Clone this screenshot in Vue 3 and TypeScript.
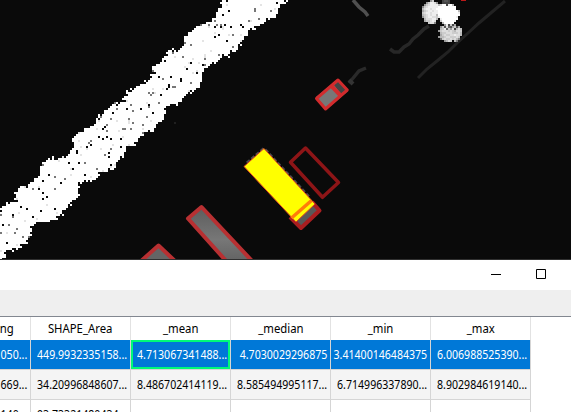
<script setup lang="ts">
type Point = [number, number]

const columns = ['ng', 'SHAPE_Area', '_mean', '_median', '_min', '_max']
const rows = [
  ['050...', '449.9932335158...', '4.713067341488...', '4.7030029296875', '3.41400146484375', '6.006988525390...'],
  ['669...', '34.20996848607...', '8.486702414119...', '8.585494995117...', '6.714996337890...', '8.902984619140...'],
  ['140...', '93.73321480434...', '', '', '', ''],
]

const band: Point[] = [
  [223, -2], [221, 8], [216, 12], [215, 19], [208, 22], [200, 24], [192, 31], [186, 36], [184, 43], [178, 52],
  [174, 48], [169, 50], [162, 61], [157, 64], [152, 66], [152, 77], [148, 78], [145, 82], [140, 85], [134, 89],
  [127, 92], [123, 104], [115, 103], [108, 107], [103, 115], [98, 117], [95, 124], [87, 128], [79, 132], [73, 138],
  [73, 147], [68, 155], [58, 158], [48, 159], [40, 164], [40, 175], [33, 181], [30, 186], [20, 187], [16, 193],
  [16, 202], [5, 203], [1, 207], [-2, 215], [-2, 260], [5, 258], [7, 249], [14, 250], [25, 243], [32, 236],
  [32, 226], [38, 222], [50, 222], [60, 216], [69, 206], [76, 199], [79, 190], [78, 181], [83, 182], [95, 181],
  [97, 175], [103, 172], [115, 167], [118, 159], [126, 155], [124, 150], [127, 146], [135, 146], [138, 140],
  [145, 132], [154, 131], [158, 123], [164, 118], [166, 107], [175, 104], [179, 106], [184, 96], [190, 93],
  [197, 88], [203, 80], [203, 70], [210, 65], [217, 63], [221, 56], [228, 57], [231, 52], [238, 49], [240, 42],
  [247, 36], [249, 30], [260, 26], [266, 21], [275, 16], [277, 9], [283, 5], [288, -2],
]

function inside(x: number, y: number, poly: Point[]): boolean {
  let hit = false
  for (let i = 0, j = poly.length - 1; i < poly.length; j = i++) {
    const [ax, ay] = poly[i]
    const [bx, by] = poly[j]
    if (ay > y !== by > y && x < ((bx - ax) * (y - ay)) / (by - ay) + ax) hit = !hit
  }
  return hit
}

let seed = 7351
function random(): number {
  seed = (seed * 16807) % 2147483647
  return seed / 2147483647
}

// Raster cells of the bright strip, with no-data specks and dimmer returns
let white = ''
let grey = ''
let pale = ''
for (let y = 0; y < 259; y += 2) {
  for (let x = 0; x < 290; x += 2) {
    const jx = (random() - 0.5) * 3.6
    const jy = (random() - 0.5) * 3.6
    const r = random()
    if (!inside(x + 1 + jx, y + 1 + jy, band)) continue
    const cell = `M${x} ${y}h2v2h-2z`
    if (r < 0.018) continue
    if (r < 0.034) grey += cell
    else if (r < 0.052) pale += cell
    else white += cell
  }
}

// Brightness of each 2px cell, one hex digit per cell; "." is empty
const blobRows = [
  '.....9c....4554......',
  '...9ceed9..4444......',
  '..9cdeeeebdff4efb....',
  '.8cdeeeeefffffffff...',
  '.bdeedeeffffffffff...',
  '.acdeedeeffffffffffb.',
  '.cdeedeeeffffffffffe.',
  '.bcdedeebfffffffffff.',
  '.9cdeeddceffffffffe..',
  '..bdddeeb.effffffff..',
  '..accded..cffffffe...',
  '....cdd8...bfffff....',
  '............9e4c4a...',
  '..........9c5d65ac5a.',
  '..........bce6c9d4bdb',
  '.........9cdddcdcbddc',
  '..........bccdddcccdb',
  '..........acdccddeddb',
  '.........9bbcddcccdc.',
  '..........7cdccdcdb8.',
  '............9bdc.b7..',
]
const blobCells = blobRows.flatMap((row, j) =>
  [...row].flatMap((c, i) => (c === '.' ? [] : [{ x: 420 + i * 2, y: j * 2, fill: `#${c}${c}${c}` }])),
)
</script>

<template>
  <main class="screen">
    <svg class="map" width="571" height="260" viewBox="0 0 571 260">
      <defs>
        <linearGradient id="roof" x1="0" y1="0" x2="0" y2="1">
          <stop offset="0" stop-color="#5c5c5c" />
          <stop offset=".6" stop-color="#777" />
          <stop offset="1" stop-color="#626262" />
        </linearGradient>
      </defs>
      <rect width="571" height="260" fill="#0a0a0a" />
      <g shape-rendering="crispEdges">
        <path :d="white" fill="#fff" />
        <path :d="pale" fill="#e4e4e4" />
        <path :d="grey" fill="#777" />
        <path d="M174 122h2v2h-2z" fill="#202020" />
      </g>
      <g fill="none">
        <path d="M353 0l6 7 6 5 3 4" stroke="#505050" stroke-width="3.5" />
        <path d="M390 49l4 3h5l5-5 5-3 4-5 5-4 6-6 5-3" stroke="#272727" stroke-width="3.5" />
        <path d="M418 78l9-9 10-8 11-9 9-9 10-9 12-11 13-11 13-11" stroke="#222" stroke-width="3" />
        <path d="M349 83l5-6 5-6 7-3" stroke="#2a2a2a" stroke-width="3.5" />
        <path d="M349 80l4 4" stroke="#343434" stroke-width="4" />
      </g>
      <g shape-rendering="crispEdges">
        <rect v-for="(c, i) in blobCells" :key="i" :x="c.x" :y="c.y" width="2" height="2" :fill="c.fill" />
        <path d="M461 0h5v1h-5z" fill="#bd1919" />
      </g>
      <path d="M316 97L338 79L348 91L327 109Z" fill="#777" />
      <path d="M334 85l5-4 7 9-5 4z" fill="#444" />
      <g fill="none" stroke="#d22b2d" stroke-width="3" stroke-linejoin="round">
        <path d="M316.5 98.5L338 80L347.3 90L325.5 109Z" />
        <path d="M331 85.5L341 96" stroke-width="4" />
      </g>
      <path d="M188 218L201.5 206.5L255 262H227Z" fill="url(#roof)" />
      <path d="M227 262L188 218.5L201.5 207L253 262" fill="none" stroke="#b83032" stroke-width="4" stroke-linejoin="round" />
      <path d="M140 262L158.5 245.5L176 262" fill="#656565" stroke="#b83032" stroke-width="4" stroke-linejoin="round" />
      <path d="M290.5 162.3L305.5 148L338.5 182.5L322.5 197.3Z" fill="none" stroke="#8e1517" stroke-width="3.5" stroke-linejoin="round" />
      <path d="M247 163L264 148.5L310 198" fill="none" stroke="#4c4c4c" stroke-width="3" stroke-dasharray="4 2" />
      <path d="M291 217L313 202L319 210L301 227Z" fill="#595959" />
      <path d="M290 217L301 228L319.5 210.5L312 202" fill="none" stroke="#a91e20" stroke-width="4" stroke-linejoin="round" />
      <path d="M244 166.5L264 148.5L315 204L296 222Z" fill="#ff0" stroke="#df3f22" stroke-width="1" />
      <path d="M291.5 218L311.5 200.5" stroke="#ff7c0a" stroke-width="3.5" />
      <path d="M0 259.5H571" stroke="#303030" />
    </svg>

    <section class="window">
      <header class="titlebar">
        <svg class="minimize" width="11" height="11"><path d="M0 5.5h10" stroke="#000" /></svg>
        <svg class="maximize" width="11" height="11"><path d="M.5 .5h9v9h-9z" fill="none" stroke="#000" /></svg>
      </header>
      <div class="toolbar"></div>
      <div class="table">
        <div class="row head">
          <div v-for="c in columns" :key="c" class="cell"><span>{{ c }}</span></div>
        </div>
        <div v-for="(r, i) in rows" :key="i" class="row" :class="{ selected: i === 0, alternate: i === 1 }">
          <div v-for="(v, j) in r" :key="j" class="cell" :class="{ current: i === 0 && j === 2 }"><span>{{ v }}</span></div>
        </div>
      </div>
    </section>
  </main>
</template>

<style>
body {
  margin: 0;
  overflow: hidden;
}
</style>

<style scoped>
.screen {
  width: 571px;
  height: 412px;
  overflow: hidden;
  background: #fff;
  font: 12px/16px 'Noto Sans', 'Open Sans', sans-serif;
  color: #000;
}
.map {
  display: block;
}
.titlebar {
  height: 30px;
  box-sizing: border-box;
  padding: 9px 24px 0 0;
  display: flex;
  justify-content: flex-end;
  gap: 34px;
}
.toolbar {
  height: 26px;
  background: #efefef;
  border-bottom: 1px solid #828790;
}
.table {
  width: 531px;
  height: 95px;
  overflow: hidden;
}
.row {
  display: grid;
  grid-template-columns: 31px repeat(5, 100px);
  height: 30px;
}
.cell {
  box-sizing: border-box;
  display: flex;
  align-items: center;
  justify-content: flex-end;
  padding: 1px 3px 0 0;
  border-right: 1px solid #d5d5d5;
  border-bottom: 1px solid #d5d5d5;
  white-space: nowrap;
  overflow: hidden;
}
.cell span {
  flex: none;
  transform: scaleX(0.882);
  transform-origin: right;
}
.head {
  height: 23px;
}
.head .cell {
  justify-content: center;
  padding: 1px 0 0;
  border-bottom: 0;
  border-color: #e2e2e2;
}
.head .cell span {
  transform: scaleX(0.945);
  transform-origin: center;
}
.head .cell:first-child {
  justify-content: flex-end;
  padding-right: 16px;
}
.head .cell:first-child span {
  transform-origin: right;
}
.selected .cell {
  background: #0078d7;
  color: #fff;
}
.alternate .cell {
  background: #f4f4f4;
}
.current {
  box-shadow: inset 0 0 0 2px #00fa78;
}
</style>
